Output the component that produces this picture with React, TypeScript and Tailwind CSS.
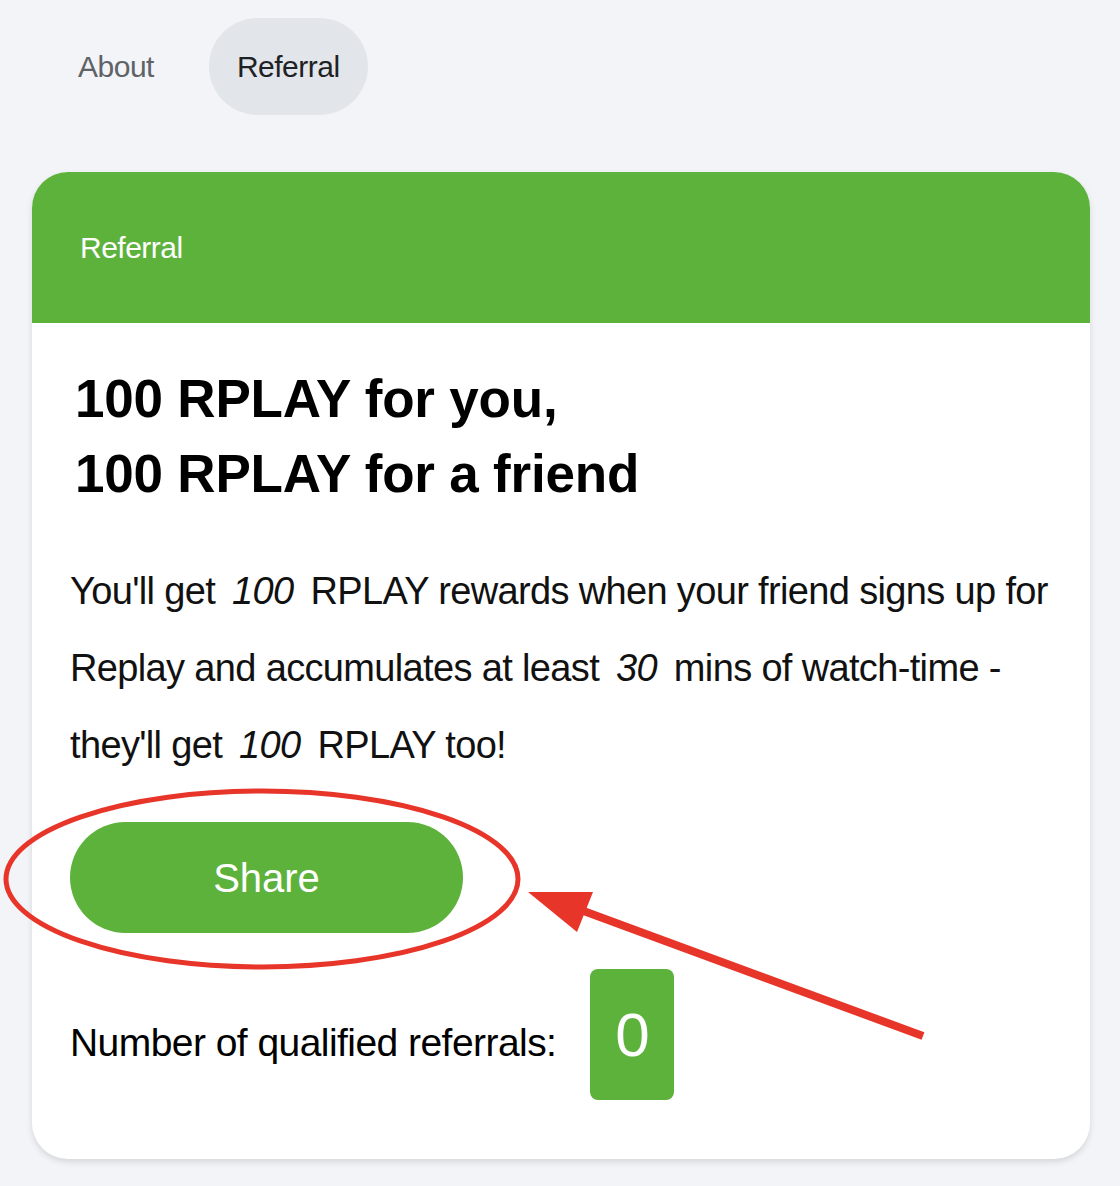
import { useState } from 'react';

const FONT = '[font-family:"Liberation_Sans",Arial,sans-serif]';

const TABS = ['About', 'Referral'];

function Annotation() {
    // red hand-drawn marker around the Share button
    return (
        <svg className="pointer-events-none absolute left-0 top-0" width="1120" height="1186" viewBox="0 0 1120 1186">
            <ellipse cx="262" cy="879" rx="256" ry="88" fill="none" stroke="#e8352a" strokeWidth="5" />
            <line x1="923" y1="1036" x2="570" y2="906" stroke="#e8352a" strokeWidth="8" />
            <polygon points="528,892 593,892 577,932" fill="#e8352a" />
        </svg>
    );
}

export default function App() {
    const [tab, setTab] = useState('Referral');
    const referrals = 0;

    return (
        <div className={`relative min-h-[1186px] bg-[#f2f4f8] pt-[18px] ${FONT}`}>
            {/* tabs */}
            <div className="flex items-center gap-[27px] pl-[50px]">
                {TABS.map((t) => (
                    <button
                        key={t}
                        type="button"
                        onClick={() => setTab(t)}
                        className={`h-[97px] rounded-full px-[28px] text-[30px] tracking-[-0.5px] ${
                            tab === t ? 'bg-[#e2e5ea] text-[#1f2225]' : 'text-[#5f6266]'
                        }`}
                    >
                        {t}
                    </button>
                ))}
            </div>

            {/* card */}
            <div className="ml-[32px] mr-[30px] mt-[57px] overflow-hidden rounded-[36px] bg-white shadow-[0_3px_6px_rgba(0,0,0,0.12)]">
                <div className="flex h-[151px] items-center bg-[#5db23c] pl-[48px] text-[30px] tracking-[-0.5px] text-white">
                    Referral
                </div>
                <div className="px-[38px] pt-[38px] pb-[59px]">
                    <h2 className="ml-[5px] text-[53px] font-bold leading-[75px] tracking-[-0.2px] text-black">
                        100 RPLAY for you,
                        <br />
                        100 RPLAY for a friend
                    </h2>
                    <div className="mt-[42px] text-[38px] leading-[77px] tracking-[-0.65px] text-[#111]">
                        <p className="whitespace-nowrap">
                            You'll get <i className="mx-[7px]">100</i> RPLAY rewards when your friend signs up for
                        </p>
                        <p className="whitespace-nowrap">
                            Replay and accumulates at least <i className="mx-[7px]">30</i> mins of watch-time -
                        </p>
                        <p className="whitespace-nowrap">
                            they'll get <i className="mx-[7px]">100</i> RPLAY too!
                        </p>
                    </div>
                    <button
                        type="button"
                        className="mt-[38px] flex h-[111px] w-[393px] items-center justify-center rounded-full bg-[#5db23c] text-[40px] text-white"
                    >
                        Share
                    </button>
                    <div className="mt-[36px] flex items-center gap-[34px]">
                        <span className="mt-[18px] text-[39px] tracking-[-0.55px] text-black">Number of qualified referrals:</span>
                        <span className="flex h-[131px] w-[84px] items-center justify-center rounded-[8px] bg-[#5db23c] text-[62px] text-white">
                            {referrals}
                        </span>
                    </div>
                </div>
            </div>

            <Annotation />
        </div>
    );
}
